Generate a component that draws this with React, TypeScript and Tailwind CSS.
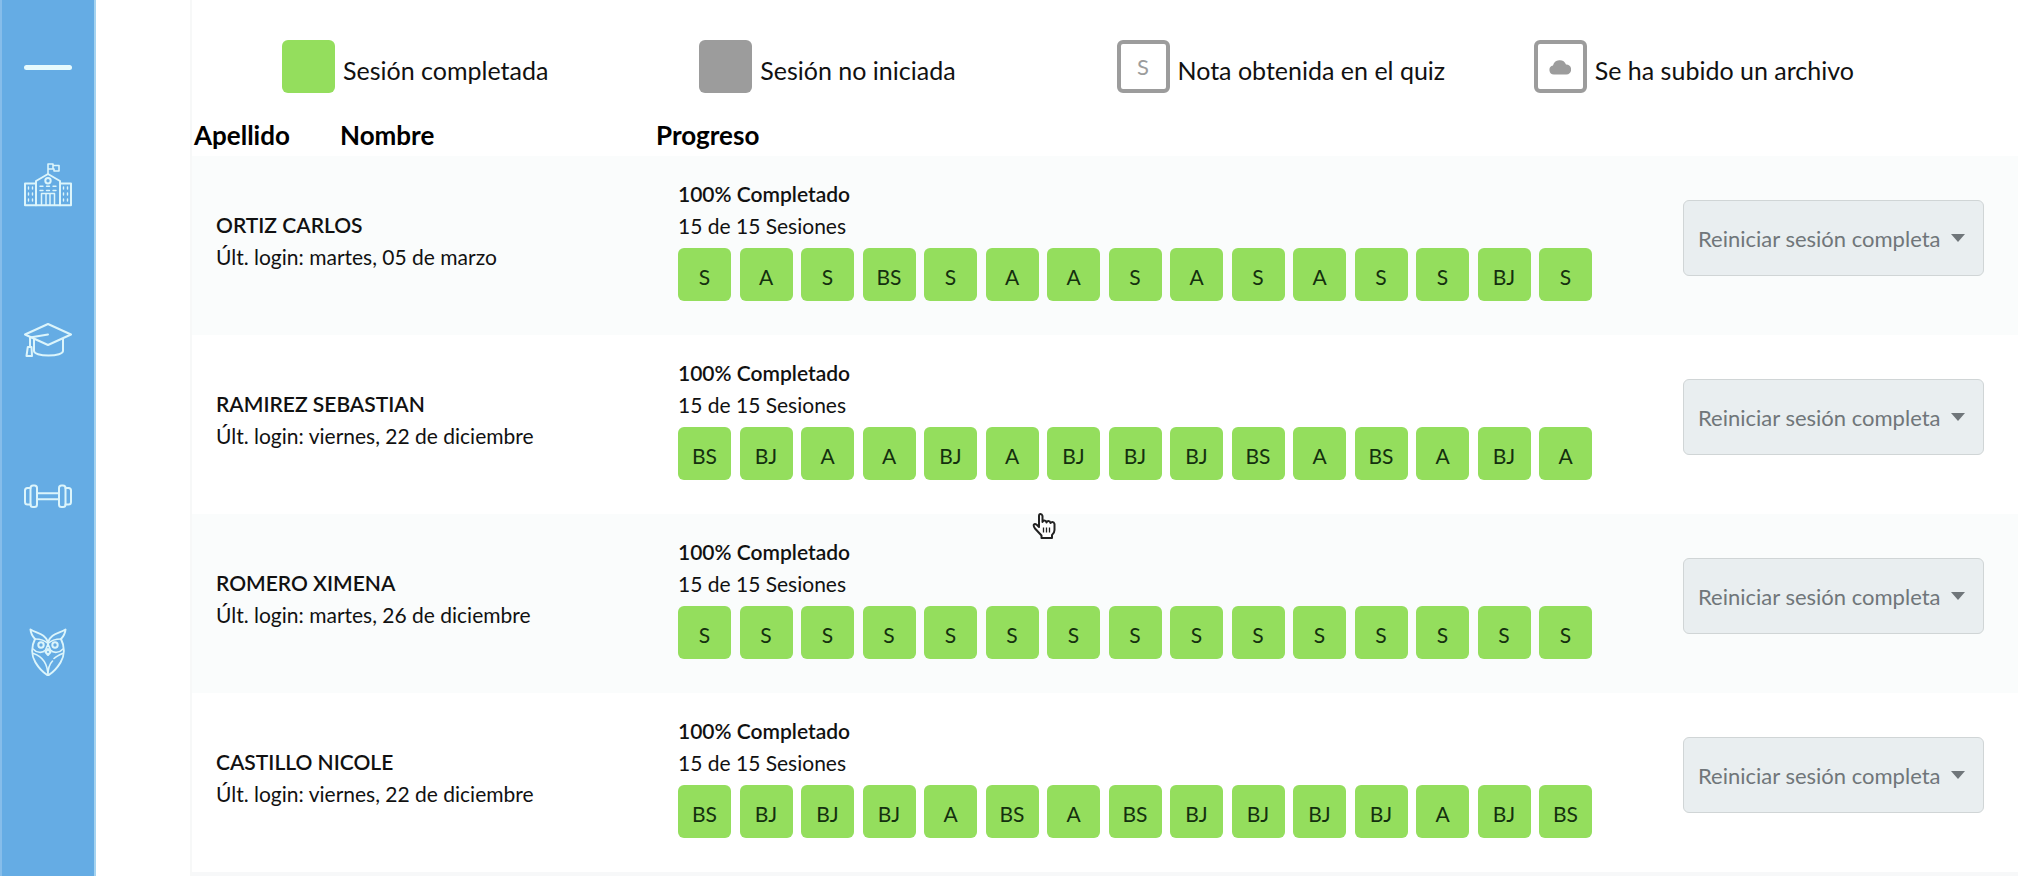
import type { ReactNode } from "react";

interface Student {
  name: string;
  login: string;
  grades: string[];
}

const students: Student[] = [
  {
    name: "ORTIZ CARLOS",
    login: "martes, 05 de marzo",
    grades: ["S", "A", "S", "BS", "S", "A", "A", "S", "A", "S", "A", "S", "S", "BJ", "S"],
  },
  {
    name: "RAMIREZ SEBASTIAN",
    login: "viernes, 22 de diciembre",
    grades: ["BS", "BJ", "A", "A", "BJ", "A", "BJ", "BJ", "BJ", "BS", "A", "BS", "A", "BJ", "A"],
  },
  {
    name: "ROMERO XIMENA",
    login: "martes, 26 de diciembre",
    grades: ["S", "S", "S", "S", "S", "S", "S", "S", "S", "S", "S", "S", "S", "S", "S"],
  },
  {
    name: "CASTILLO NICOLE",
    login: "viernes, 22 de diciembre",
    grades: ["BS", "BJ", "BJ", "BJ", "A", "BS", "A", "BS", "BJ", "BJ", "BJ", "BJ", "A", "BJ", "BS"],
  },
];

function Icon({ children }: { children: ReactNode }) {
  return (
    <svg
      viewBox="0 0 48 48"
      className="size-12 fill-none stroke-[#dcf5fb] stroke-2"
      strokeLinecap="round"
      strokeLinejoin="round"
    >
      {children}
    </svg>
  );
}

function SchoolIcon() {
  return (
    <Icon>
      <path d="M24 13.5V4h5v5h-5M29 5.5h6v5.500h-5V9" strokeWidth="1.600" />
      <path d="M12 45.200V21l12-7 12 7v24.200" />
      <path d="M12 23.500H1v21.700h46V23.500H36" />
      <circle cx="24" cy="20.800" r="2.700" />
      <path d="M17.500 45V33.500h13V45M22 45V33.500M26 45V33.500" strokeWidth="1.500" />
      <path
        d="M16 26.300h3M22.500 26.300h3M29 26.300h3M16 30.500h3M22.500 30.500h3M29 30.500h3M4.500 27v2M8.500 27v2M4.500 33v2M8.500 33v2M4.500 39v2M8.500 39v2M39.500 27v2M43.500 27v2M39.500 33v2M43.500 33v2M39.500 39v2M43.500 39v2"
        strokeWidth="1.400"
      />
    </Icon>
  );
}

function GraduationIcon() {
  return (
    <Icon>
      <path d="M24 8 47 18.500 24 29 1 18.500Z" />
      <path d="M10 23v12c0 2.500 6 4.500 14.500 4.500S39 37.500 39 35V23" />
      <path d="M24 18.500 6 21.500V31" />
      <path d="M3.800 31h3.700l.5 9H2.500Z" />
    </Icon>
  );
}

function DumbbellIcon() {
  return (
    <Icon>
      <rect x="6.500" y="13.500" width="6.500" height="21.500" rx="2.500" />
      <rect x="35" y="13.500" width="6.500" height="21.500" rx="2.500" />
      <path d="M6.500 16H3.500Q1 16 1 18.500v11.500Q1 32.500 3.500 32.500h3M41.500 16h3Q47 16 47 18.500v11.500Q47 32.500 44.500 32.500h-3" />
      <path d="M13 21.300h22M13 27.200h22" />
    </Icon>
  );
}

function OwlIcon() {
  return (
    <Icon>
      <path d="M6.500 1.500c7 4.500 14 3.500 17.500 12.500C27.500 5 34.500 6 41.500 1.500c-.5 5-2 7-4.500 9.500 4 8 3.500 17-.5 23.500-3 5-7.500 10-12.500 13-5-3-9.500-8-12.500-13C7.500 28 7 19 11 11 8.500 8.500 7 6.500 6.500 1.500Z" />
      <path d="M11 11c5 0 10 1.500 13 4.500 3-3 8-4.500 13-4.500" strokeWidth="1.600" />
      <circle cx="17" cy="17" r="2.700" />
      <circle cx="31" cy="17" r="2.700" />
      <path d="M9 21c3.500 4 9.500 4.500 12.500 1L24 16l2.500 6c3 3.500 9 3 12.500-1" strokeWidth="1.600" />
      <path d="m24 21 2.500 3-2.500 3-2.500-3Z" />
      <path
        d="M9.500 25.500C17 28 23.500 33 24 47.500M38.500 25.500C35 27 32 28.500 30 30.500M28.500 33C25.500 36 24 40 24 47"
        strokeWidth="1.600"
      />
    </Icon>
  );
}

function Sidebar() {
  return (
    <nav
      aria-label="Menú principal"
      className="flex w-24 shrink-0 flex-col items-center border-x-2 border-l-[#86bdea] border-r-[#a5d3f0] bg-[#65ace4] pt-[43px]"
    >
      <button type="button" aria-label="Abrir menú" className="mb-[69px] flex h-12 w-12 items-center">
        <span className="h-[5px] w-12 rounded-sm bg-[#e6fafd]" />
      </button>
      <div className="flex flex-col gap-[108px]">
        <a href="#escuela" aria-label="Escuela"><SchoolIcon /></a>
        <a href="#cursos" aria-label="Cursos"><GraduationIcon /></a>
        <a href="#practica" aria-label="Práctica"><DumbbellIcon /></a>
        <a href="#buho" aria-label="Búho"><OwlIcon /></a>
      </div>
    </nav>
  );
}

function LegendItem({ box, label }: { box: ReactNode; label: string }) {
  return (
    <li className="flex gap-2">
      {box}
      <span className="pt-[14px] text-[25px] leading-8">{label}</span>
    </li>
  );
}

function Legend() {
  return (
    <ul className="grid grid-cols-4 pt-10 pr-[67px] pl-[90px]">
      <LegendItem
        box={<span className="size-[53px] shrink-0 rounded-md bg-[#94de5d]" />}
        label="Sesión completada"
      />
      <LegendItem
        box={<span className="size-[53px] shrink-0 rounded-md bg-[#9c9c9c]" />}
        label="Sesión no iniciada"
      />
      <LegendItem
        box={
          <span className="flex size-[53px] shrink-0 items-center justify-center rounded-md border-4 border-[#9c9c9c] text-[22px] text-[#9c9c9c]">
            S
          </span>
        }
        label="Nota obtenida en el quiz"
      />
      <LegendItem
        box={
          <span className="flex size-[53px] shrink-0 items-center justify-center rounded-md border-4 border-[#9c9c9c]">
            <svg viewBox="0 0 22 16" className="h-4 w-[22px] fill-[#9c9c9c]">
              <path d="M5 15.500a4.500 4.500 0 0 1-1-8.900A6.800 6.800 0 0 1 17 5.500a5 5 0 0 1 .3 10Z" />
            </svg>
          </span>
        }
        label="Se ha subido un archivo"
      />
    </ul>
  );
}

function StudentRow({ student }: { student: Student }) {
  return (
    <tr className="h-[179px] align-top odd:bg-[#fafcfc]">
      <td colSpan={2} className="pt-[53px] pl-6 text-[21px] leading-8">
        <p className="font-semibold">{student.name}</p>
        <p>Últ. login: {student.login}</p>
      </td>
      <td className="pt-[22px] pl-[25px] text-[21px] leading-8">
        <p className="font-semibold">100% Completado</p>
        <p>15 de 15 Sesiones</p>
        <ul className="mt-[6px] flex max-w-[914px] justify-between">
          {student.grades.map((grade, i) => (
            <li
              key={i}
              className="flex size-[53px] items-center justify-center rounded-md bg-[#94de5d] pt-1 text-[#14300f]"
            >
              {grade}
            </li>
          ))}
        </ul>
      </td>
      <td className="pt-11">
        <button
          type="button"
          className="flex h-[76px] w-[301px] items-center gap-[10px] rounded-md border border-[#d0d5d6] bg-[#e9eef0] pl-[14px] text-[22px] text-[#70767a]"
        >
          Reiniciar sesión completa
          <svg viewBox="0 0 14 8" className="h-2 w-[14px] fill-[#70767a]">
            <path d="M0 0h14L7 8Z" />
          </svg>
        </button>
      </td>
    </tr>
  );
}

function HandCursor() {
  return (
    <svg
      viewBox="0 0 24 26"
      className="pointer-events-none absolute top-[513px] left-[1032px] h-[26px] w-6 fill-white stroke-[#222] stroke-2"
      strokeLinejoin="round"
    >
      <path d="M7 14V3Q7 1 8.500 1T10.500 3V9Q11 7.500 12.500 7.500T14.500 9.500Q15 8 16.500 8T18.500 10Q19 9 20.500 9T22.500 11V17Q22.500 20 20 22V25H9.500V22.500L3 15.500Q1 12.500 2 11.500T5 12Z" />
      <path d="M11.500 14.500v5M14.500 14.500v5M17.500 14.500v5" strokeWidth="1.300" />
    </svg>
  );
}

export default function App() {
  return (
    <div className="relative flex min-h-screen bg-white font-['Lato',sans-serif] text-[#111]">
      <Sidebar />
      <main className="ml-[94px] flex flex-1 flex-col border-l-2 border-[#f7f8f8]">
        <Legend />
        <table className="mt-[21px] w-full table-fixed border-collapse">
          <colgroup>
            <col className="w-[147px]" />
            <col className="w-[314px]" />
            <col />
            <col className="w-[335px]" />
          </colgroup>
          <thead>
            <tr className="h-[42px] text-left text-[26px] leading-8 font-bold text-black">
              <th className="pb-px pl-0.5">Apellido</th>
              <th className="pb-px pl-px">Nombre</th>
              <th className="pb-px pl-[3px]">Progreso</th>
              <th aria-label="Acciones" />
            </tr>
          </thead>
          <tbody>
            {students.map((student) => (
              <StudentRow key={student.name} student={student} />
            ))}
          </tbody>
        </table>
        <div className="flex-1 bg-[#f7f8f9]" />
      </main>
      <HandCursor />
    </div>
  );
}
